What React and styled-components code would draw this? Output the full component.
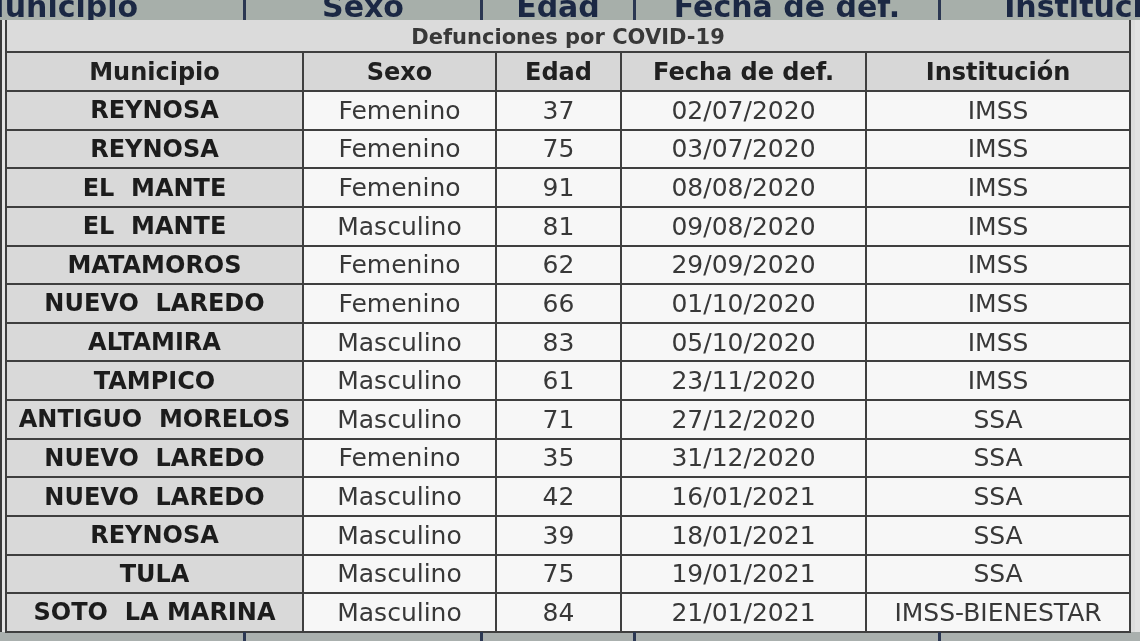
import React from "react";
import styled, { createGlobalStyle } from "styled-components";

const GlobalStyle = createGlobalStyle`
  html, body {
    margin: 0;
    padding: 0;
    background: #b3b9b6;
  }
`;

const ROWS = [
  ["REYNOSA", "Femenino", "37", "02/07/2020", "IMSS"],
  ["REYNOSA", "Femenino", "75", "03/07/2020", "IMSS"],
  ["EL  MANTE", "Femenino", "91", "08/08/2020", "IMSS"],
  ["EL  MANTE", "Masculino", "81", "09/08/2020", "IMSS"],
  ["MATAMOROS", "Femenino", "62", "29/09/2020", "IMSS"],
  ["NUEVO  LAREDO", "Femenino", "66", "01/10/2020", "IMSS"],
  ["ALTAMIRA", "Masculino", "83", "05/10/2020", "IMSS"],
  ["TAMPICO", "Masculino", "61", "23/11/2020", "IMSS"],
  ["ANTIGUO  MORELOS", "Masculino", "71", "27/12/2020", "SSA"],
  ["NUEVO  LAREDO", "Femenino", "35", "31/12/2020", "SSA"],
  ["NUEVO  LAREDO", "Masculino", "42", "16/01/2021", "SSA"],
  ["REYNOSA", "Masculino", "39", "18/01/2021", "SSA"],
  ["TULA", "Masculino", "75", "19/01/2021", "SSA"],
  ["SOTO  LA MARINA", "Masculino", "84", "21/01/2021", "IMSS-BIENESTAR"],
];

const HEADERS = ["Municipio", "Sexo", "Edad", "Fecha de def.", "Institución"];
const COL_WIDTHS = [297, 193, 125, 245, 264];
// the sheet behind the photo: wider columns, partly off screen
const BAND_COLS = [
  { label: "Municipio", width: 373, offset: -130 },
  { label: "Sexo", width: 237 },
  { label: "Edad", width: 153 },
  { label: "Fecha de def.", width: 305 },
  { label: "Institución", width: 310 },
];

const Page = styled.div`
  width: 1140px;
  height: 641px;
  overflow: hidden;
  background: #b3b9b6;
  font-family: "DejaVu Sans", Verdana, sans-serif;
  filter: blur(0.45px);
`;

const Band = styled.div`
  display: flex;
  height: ${(p) => p.$height}px;
  overflow: hidden;
  background: ${(p) => p.$bg};
`;

const BandCell = styled.div`
  flex: 0 0 ${(p) => p.$width}px;
  margin-left: ${(p) => p.$offset || 0}px;
  display: flex;
  align-items: flex-end;
  justify-content: center;
  border-left: ${(p) => (p.$first ? "none" : "3px solid #2b3752")};
  box-sizing: border-box;
  color: #1b2844;
  font-weight: bold;
  font-size: 30px;
  line-height: 30px;
  margin-bottom: -2px;
  white-space: nowrap;
`;

const Sheet = styled.div`
  display: flex;
  height: 612px;
  background: #e4e4e4;
  border-left: 2px solid #3a3a3a;
  padding-left: 3px;
`;

const Table = styled.table`
  border-collapse: collapse;
  table-layout: fixed;
  width: 1126px;
  height: 612px;
  background: #f6f6f6;
`;

const Row = styled.tr`
  height: ${(p) => p.$h}px;
`;

const TitleCell = styled.td`
  padding: 0;
  border: 2px solid #3f3f3f;
  border-top: none;
  background: #dbdbdb;
  color: #383838;
  font-weight: bold;
  font-size: 21px;
  text-align: center;
  vertical-align: bottom;
  line-height: 28px;
`;

const HeadCell = styled.th`
  padding: 0;
  border: 2px solid #3f3f3f;
  background: #d7d7d7;
  color: #202020;
  font-size: 24px;
  font-weight: bold;
  text-align: center;
  line-height: 1;
`;

const Cell = styled.td`
  padding: 0;
  border: 2px solid #3f3f3f;
  background: ${(p) => (p.$muni ? "#d9d9d9" : "#f7f7f7")};
  color: ${(p) => (p.$muni ? "#1c1c1c" : "#383838")};
  font-size: ${(p) => (p.$muni ? 24 : 25)}px;
  font-weight: ${(p) => (p.$muni ? "bold" : "normal")};
  text-align: center;
  white-space: pre;
  line-height: 1;
`;

const RightEdge = styled.div`
  flex: 1;
  background: #e2e2e2;
  border-left: 4px solid #dcdcdc;
`;

export default function App() {
  return (
    <>
      <GlobalStyle />
      <Page>
        <Band $height={20} $bg="#a7afaa">
          {BAND_COLS.map((c, i) => (
            <BandCell key={c.label} $width={c.width} $offset={c.offset} $first={i === 0}>
              {c.label}
            </BandCell>
          ))}
        </Band>
        <Sheet>
          <Table>
            <colgroup>
              {COL_WIDTHS.map((w, i) => (
                <col key={i} style={{ width: w }} />
              ))}
            </colgroup>
            <tbody>
              <Row $h={32}>
                <TitleCell colSpan={5}>Defunciones por COVID-19</TitleCell>
              </Row>
              <Row $h={39}>
                {HEADERS.map((h) => (
                  <HeadCell key={h}>{h}</HeadCell>
                ))}
              </Row>
              {ROWS.map((row, r) => (
                <Row key={r} $h={38.64}>
                  {row.map((v, c) => (
                    <Cell key={c} $muni={c === 0}>
                      {v}
                    </Cell>
                  ))}
                </Row>
              ))}
            </tbody>
          </Table>
          <RightEdge />
        </Sheet>
        <Band $height={9} $bg="#aab0ae">
          {BAND_COLS.map((c, i) => (
            <BandCell key={c.label} $width={c.width} $offset={c.offset} $first={i === 0} />
          ))}
        </Band>
      </Page>
    </>
  );
}
